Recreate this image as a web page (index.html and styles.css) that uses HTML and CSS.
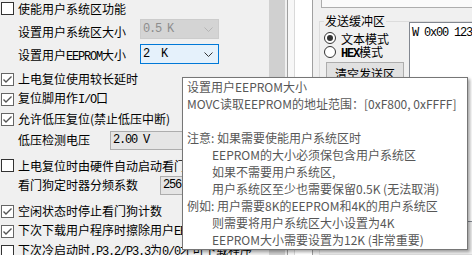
FILE: index.html
```html
<!DOCTYPE html>
<html>
<head>
<meta charset="utf-8">
<link rel="stylesheet" href="styles.css">
</head>
<body>
<div class="app">
  <div class="left">
    <div class="row r1"><span class="cb"></span><span>使能用户系统区功能</span></div>
    <div class="row r2"><span class="lbl w122 low3">设置用户系统区大小</span><span class="combo disabled w79"><span class="val">0.5 K</span><svg class="chev" width="9" height="5" viewBox="0 0 9 5"><path d="M0.5 0.5 L4.5 4.5 L8.5 0.5" /></svg></span></div>
    <div class="row r3"><span class="lbl w122 low2">设置用户<span class="en">EEPROM</span>大小</span><span class="combo focus w79"><span class="val">2  K</span><svg class="chev" width="9" height="5" viewBox="0 0 9 5"><path d="M0.5 0.5 L4.5 4.5 L8.5 0.5" /></svg></span></div>
    <div class="row r4"><span class="cb on"><svg width="11" height="11" viewBox="0 0 11 11"><path d="M1.5 5.5 L4 8 L9.5 2.5" /></svg></span><span>上电复位使用较长延时</span></div>
    <div class="row"><span class="cb on"><svg width="11" height="11" viewBox="0 0 11 11"><path d="M1.5 5.5 L4 8 L9.5 2.5" /></svg></span><span>复位脚用作<span class="en">I/O</span>口</span></div>
    <div class="row"><span class="cb on"><svg width="11" height="11" viewBox="0 0 11 11"><path d="M1.5 5.5 L4 8 L9.5 2.5" /></svg></span><span>允许低压复位(禁止低压中断)</span></div>
    <div class="row r7"><span class="lbl w92">低压检测电压</span><span class="combo w100"><span class="val">2.00 V</span></span></div>
    <div class="row r8"><span class="cb"></span><span>上电复位时由硬件自动启动看门狗</span></div>
    <div class="row r9"><span class="lbl w142">看门狗定时器分频系数</span><span class="combo w60"><span class="val">256</span></span></div>
    <div class="row r10"><span class="cb on"><svg width="11" height="11" viewBox="0 0 11 11"><path d="M1.5 5.5 L4 8 L9.5 2.5" /></svg></span><span>空闲状态时停止看门狗计数</span></div>
    <div class="row"><span class="cb on"><svg width="11" height="11" viewBox="0 0 11 11"><path d="M1.5 5.5 L4 8 L9.5 2.5" /></svg></span><span>下次下载用户程序时擦除用户<span class="en">EEPROM</span>区</span></div>
    <div class="row"><span class="cb"></span><span>下次冷启动时<span class="en">,P3.2/P3.3</span>为<span class="en">0/0</span>才可下载程序</span></div>
  </div>
  <div class="vscroll"></div>
  <div class="splitter"></div>
  <div class="right">
    <div class="topbox"></div>
    <fieldset class="group">
      <legend>发送缓冲区</legend>
      <div class="group-body">
        <div class="modes">
          <div class="radio-row"><span class="rb on"></span><span>文本模式</span></div>
          <div class="radio-row"><span class="rb"></span><span><span class="en hex">HEX</span>模式</span></div>
          <div class="btn">清空发送区</div>
        </div>
        <div class="textarea"><span class="en">W 0x00 1234</span></div>
      </div>
    </fieldset>
  </div>
  <div class="tooltip">
    <div class="tl">设置用户EEPROM大小</div>
    <div class="tl">MOVC读取EEPROM的地址范围：[0xF800, 0xFFFF]</div>
    <div class="tl"></div>
    <div class="tl">注意: 如果需要使能用户系统区时</div>
    <div class="tl ind">EEPROM的大小必须保包含用户系统区</div>
    <div class="tl ind">如果不需要用户系统区,</div>
    <div class="tl ind">用户系统区至少也需要保留0.5K (无法取消)</div>
    <div class="tl">例如: 用户需要8K的EEPROM和4K的用户系统区</div>
    <div class="tl ind">则需要将用户系统区大小设置为4K</div>
    <div class="tl ind">EEPROM大小需要设置为12K (非常重要)</div>
  </div>
</div>
</body>
</html>
```

FILE: styles.css
```css
* { box-sizing: border-box; }
html, body { margin: 0; padding: 0; }
body {
  background: #f0f0f0;
  font-family: "Noto Sans CJK SC", "Noto Sans", sans-serif;
  font-size: 12px;
  color: #000;
  width: 472px;
  height: 255px;
  overflow: hidden;
}
.app {
  position: relative;
  display: flex;
  width: 472px;
  height: 255px;
  overflow: hidden;
}
.left {
  width: 269px;
  flex: none;
  display: flex;
  flex-direction: column;
  overflow: hidden;
}
.row {
  display: flex;
  align-items: center;
  height: 20px;
  flex: none;
  white-space: nowrap;
  line-height: 14px;
}
.r1 { height: 17px; }
.r2 { margin-top: 2px; }
.r3 { margin-top: 5px; }
.r4 { margin-top: 5px; }
.r7 { margin-top: 1px; }
.r8 { margin-top: 6px; height: 19px; }
.r10 { margin-top: 6px; }
.en {
  font-family: "Liberation Mono", monospace;
  font-size: 12px;
  letter-spacing: -1.2px;
}
.en.hex { font-weight: bold; }
.cb {
  width: 13px;
  height: 13px;
  flex: none;
  border: 1px solid #333;
  background: #fff;
  margin-left: 1px;
  margin-right: 4px;
  display: flex;
  align-items: center;
  justify-content: center;
}
.cb.on { border-color: #666; }
.cb svg path { fill: none; stroke: #555; stroke-width: 1.4; }
.lbl { padding-left: 18px; flex: none; }
.low3 { padding-top: 6px; }
.low2 { padding-top: 4px; }
.w122 { width: 140px; }
.w92 { width: 110px; }
.w142 { width: 160px; }
.w79 { width: 79px; }
.w100 { width: 100px; }
.w60 { width: 80px; }
.combo {
  flex: none;
  height: 20px;
  display: flex;
  align-items: center;
  border: 1px solid #adadad;
  background: #e5e5e5;
  padding-left: 2px;
  font-family: "Liberation Mono", monospace;
  font-size: 12px;
  letter-spacing: -1.2px;
  white-space: pre;
  position: relative;
}
.combo .val { flex: 1; }
.combo .chev { flex: none; margin-right: 5px; }
.combo .chev path { fill: none; stroke: #333; stroke-width: 1; }
.combo.disabled { background: #d4d4d4; border-color: #cccccc; color: #8d8d8d; }
.combo.disabled .chev path { stroke: #b5b5b5; }
.combo.focus { background: #e5f1fb; border-color: #0078d7; }
.r7 .combo, .r9 .combo { height: 19px; }
.vscroll {
  width: 16px;
  flex: none;
  background: #d0d0d0;
}
.splitter {
  width: 28px;
  flex: none;
  display: flex;
  background: linear-gradient(to right, #f0f0f0 0 2px, #a0a0a0 2px 3px, #f7f7f7 3px 9px, #d9d9d9 9px 10px, #fff 10px 27px, #a0a0a0 27px 28px);
}
.right {
  flex: 1;
  padding-left: 6px;
  display: flex;
  flex-direction: column;
  min-width: 0;
}
.topbox {
  height: 8px;
  margin-left: 2px;
  border-left: 1px solid #adadad;
  border-bottom: 1px solid #adadad;
  background: #fafafa;
  flex: none;
}
.group {
  margin: 6px 0 0 0;
  padding: 0 0 0 4px;
  border: 1px solid #dcdcdc;
  border-right: none;
  min-width: 0;
  flex: 1;
}
.group legend {
  padding: 0 1px;
  margin-left: 0;
  line-height: 14px;
  height: 14px;
  font-size: 12px;
}
.group-body {
  display: flex;
  margin-top: 2px;
}
.modes {
  width: 85px;
  flex: none;
  display: flex;
  flex-direction: column;
}
.radio-row {
  display: flex;
  align-items: center;
  height: 14px;
  white-space: nowrap;
}
.radio-row:first-child { margin-top: 1px; }
.rb {
  width: 12px;
  height: 12px;
  border: 1px solid #333;
  border-radius: 50%;
  background: #fff;
  margin-right: 5px;
  flex: none;
  display: flex;
  align-items: center;
  justify-content: center;
}
.rb.on::after {
  content: "";
  width: 6px;
  height: 6px;
  border-radius: 50%;
  background: #333;
}
.btn {
  margin-top: 3px;
  margin-left: 2px;
  width: 78px;
  height: 23px;
  background: #e1e1e1;
  border: 1px solid #adadad;
  display: flex;
  align-items: center;
  justify-content: center;
  font-size: 12px;
}
.textarea {
  flex: 1;
  height: 200px;
  margin-top: -8px;
  background: #fff;
  border: 1px solid #828790;
  border-right: none;
  padding: 2px 0 0 2px;
  white-space: pre;
  line-height: 12px;
}
.tooltip {
  position: absolute;
  left: 182px;
  top: 77px;
  width: 286px;
  height: 173px;
  background: #fff;
  border: 1px solid #767676;
  box-shadow: 2px 2px 3px rgba(0,0,0,0.35);
  color: #575757;
  padding: 0 0 0 4px;
  font-size: 12px;
  white-space: nowrap;
}
.tl { height: 17px; line-height: 17px; }
.tl.ind { padding-left: 25px; }
```
